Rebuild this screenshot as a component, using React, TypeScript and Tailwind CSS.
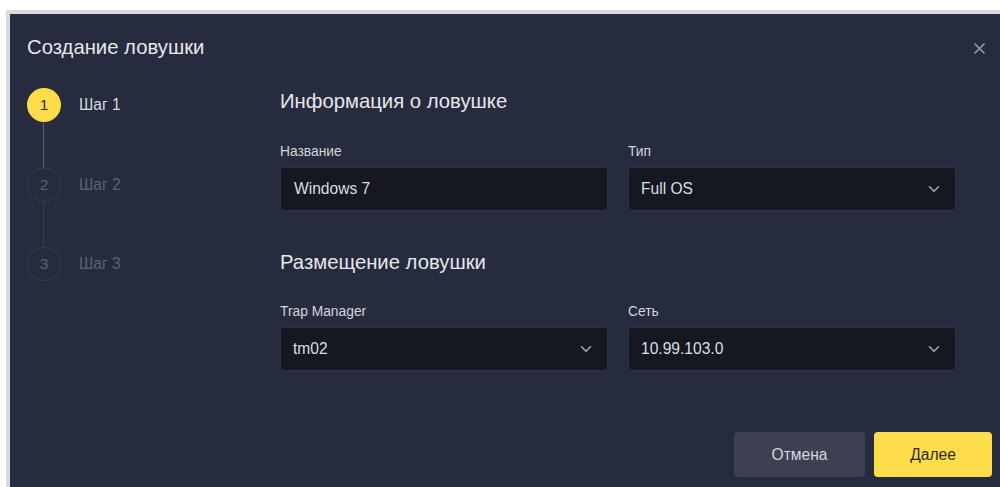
import React from "react";

const font = { fontFamily: '"Liberation Sans", Arial, sans-serif' };

function Chevron() {
  return (
    <svg width="12" height="8" viewBox="0 0 12 8" fill="none" className="shrink-0">
      <path d="M1.5 1.8 6 6.2l4.5-4.4" stroke="#a3a5ae" strokeWidth="1.6" strokeLinecap="round" strokeLinejoin="round" />
    </svg>
  );
}

function CloseIcon() {
  return (
    <svg width="11" height="11" viewBox="0 0 11 11" fill="none">
      <path d="M1 1l9 9M10 1l-9 9" stroke="#9a9dab" strokeWidth="1.6" strokeLinecap="round" />
    </svg>
  );
}

function Field({ label, value, select }: { label: string; value: string; select?: boolean }) {
  return (
    <div className="flex flex-col w-[328px]">
      <div className="h-[16px] leading-[16px] text-[13.8px] text-[#d4d5da]">{label}</div>
      <div
        className={`mt-[7px] h-[44px] rounded-[4px] border border-[#2e3243] bg-[#161821] flex items-center justify-between ${
          select ? "pl-[12px] pr-[15px]" : "pl-[13px] pr-[15px]"
        }`}
      >
        <span className="text-[15.6px] text-[#dcdde1]">{value}</span>
        {select && <Chevron />}
      </div>
    </div>
  );
}

function Step({ n, label, active }: { n: number; label: string; active?: boolean }) {
  return (
    <div className="flex items-center gap-[18px]">
      <div
        className={`w-[34px] h-[34px] rounded-full flex items-center justify-center text-[15.5px] ${
          active ? "bg-[#fddc4a] text-[#2a2a2a]" : "border border-[#3a3e52] text-[#5e6275]"
        }`}
      >
        {n}
      </div>
      <span className={`text-[15.6px] ${active ? "text-[#d9dade]" : "text-[#5e6275]"}`}>{label}</span>
    </div>
  );
}

export default function App() {
  return (
    <div className="w-[1000px] h-[487px] overflow-hidden bg-white pt-[10px] pl-[6px]" style={font}>
      <div className="w-[1010px] h-[490px] bg-[#dadada] pt-[4px] pl-[4px]">
        <div className="w-[1000px] h-[486px] bg-[#272b3e] flex flex-col">
          {/* header */}
          <div className="h-[66px] flex items-center justify-between pl-[17px] pr-[25px]">
            <h1 className="text-[20.3px] text-[#e6e7ea]">Создание ловушки</h1>
            <button className="mt-[2px]">
              <CloseIcon />
            </button>
          </div>

          {/* body */}
          <div className="mt-[8px] flex h-[283px]">
            {/* steps */}
            <div className="w-[270px] pl-[17px] flex flex-col">
              <Step n={1} label="Шаг 1" active />
              <div className="ml-[16px] w-px h-[46px] bg-[#5e6276]" />
              <Step n={2} label="Шаг 2" />
              <div className="ml-[16px] w-px h-[45px] bg-[#3a3e52]" />
              <Step n={3} label="Шаг 3" />
            </div>

            {/* form */}
            <div className="w-[676px] flex flex-col">
              <h2 className="h-[26px] leading-[26px] text-[20.3px] text-[#e6e7ea]">Информация о ловушке</h2>
              <div className="mt-[30px] flex gap-[20px]">
                <Field label="Название" value="Windows 7" />
                <Field label="Тип" value="Full OS" select />
              </div>
              <h2 className="mt-[38px] h-[26px] leading-[26px] text-[20.3px] text-[#e6e7ea]">Размещение ловушки</h2>
              <div className="mt-[29px] flex gap-[20px]">
                <Field label="Trap Manager" value="tm02" select />
                <Field label="Сеть" value="10.99.103.0" select />
              </div>
            </div>
          </div>

          {/* footer */}
          <div className="mt-[61px] flex justify-end gap-[9px] pr-[18px]">
            <button className="w-[131px] h-[45px] rounded-[4px] bg-[#3c4051] text-[15.6px] text-[#d6d7dc]">
              Отмена
            </button>
            <button className="w-[118px] h-[45px] rounded-[4px] bg-[#fddd4a] text-[15.6px] text-[#2a2b30]">
              Далее
            </button>
          </div>
        </div>
      </div>
    </div>
  );
}
